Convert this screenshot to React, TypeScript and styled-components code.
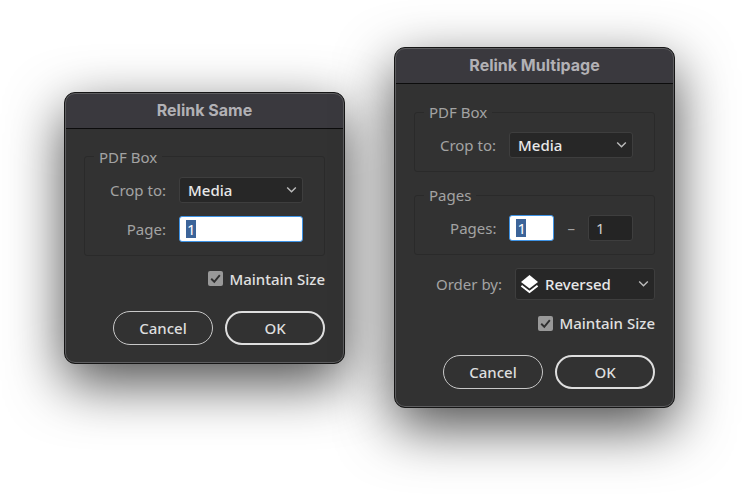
import React, { useId } from 'react';
import styled, { createGlobalStyle } from 'styled-components';

const GlobalStyle = createGlobalStyle`
  *, *::before, *::after { box-sizing: border-box; }
  body {
    margin: 0;
    background: #fff;
    font: 15px/20px "Noto Sans", sans-serif;
  }
`;

const Page = styled.main`
  display: flex;
  align-items: center;
  gap: 49px;
  min-height: 100vh;
  padding: 46px 75px 91px 64px;
`;

const Window = styled.form`
  flex: 1 1 0;
  min-width: 260px;
  max-width: 340px;
  border: 1px solid #161616;
  border-radius: 11px;
  background: #323232;
  overflow: hidden;
  position: relative;
  box-shadow: 0 19px 56px rgba(0, 0, 0, 0.7);

  &::after {
    content: "";
    position: absolute;
    inset: 0;
    border: 1px solid #5e5e60;
    border-radius: 10px;
    pointer-events: none;
  }
`;

const TitleBar = styled.h2`
  margin: 0;
  padding: 7px 12px 8px;
  border-bottom: 1px solid #0c0c0c;
  background: #3a393e;
  color: #b2b1b5;
  font: 700 16px/20px Inter, sans-serif;
  text-align: center;
`;

const Body = styled.div`
  display: flex;
  flex-direction: column;
  gap: 13px;
  padding: 18px 19px;
`;

const Group = styled.fieldset`
  display: flex;
  flex-direction: column;
  gap: 13px;
  min-width: 0;
  margin: 0;
  padding: 10px 21px 13px 9px;
  border: 1px solid #2a2a2a;
  border-radius: 3px;
`;

const Legend = styled.legend`
  padding: 0 5px;
  color: #a3a3a3;
`;

const Row = styled.div`
  display: flex;
  align-items: center;
  justify-content: flex-end;
  gap: 13px;
`;

const Label = styled.label`
  color: #a3a3a3;
`;

const SelectBox = styled.span<{ $large?: boolean }>`
  display: grid;
  align-items: center;
  position: relative;
  width: ${(p) => (p.$large ? 140 : 124)}px;
  height: ${(p) => (p.$large ? 32 : 26)}px;
  color: #e8e8e8;
`;

const Select = styled.select<{ $large?: boolean }>`
  appearance: none;
  width: 100%;
  height: 100%;
  padding: 0 24px 0 ${(p) => (p.$large ? 29 : 8)}px;
  border: 1px solid #3e3e3e;
  border-radius: 3px;
  background: #272727;
  color: inherit;
  font: inherit;
  font-weight: 500;
`;

const Chevron = styled.svg`
  position: absolute;
  right: 6px;
  width: 11px;
  height: 8px;
  pointer-events: none;
`;

const LayersIcon = styled.svg`
  position: absolute;
  left: 5px;
  width: 19px;
  height: 20px;
  pointer-events: none;
`;

const TextInput = styled.input<{ $wide?: boolean; $selected?: boolean }>`
  width: ${(p) => (p.$wide ? 124 : 45)}px;
  height: 26px;
  padding: 0 7px;
  border: 1px solid ${(p) => (p.$selected ? '#3f94e6' : '#3e3e3e')};
  border-radius: 3px;
  outline: none;
  background: ${(p) =>
    p.$selected
      ? 'linear-gradient(#3c6499, #3c6499) 6px center / 10px 18px no-repeat #fff'
      : '#242424'};
  color: ${(p) => (p.$selected ? '#fff' : '#cfcfcf')};
  font: inherit;
`;

const Dash = styled.span`
  color: #a3a3a3;
`;

const CheckLabel = styled.label`
  display: flex;
  align-items: center;
  align-self: flex-end;
  gap: 6px;
  color: #e0e0e0;
  font-weight: 500;
`;

const CheckBox = styled.span`
  display: grid;
  position: relative;
  width: 15px;
  height: 15px;
`;

const CheckInput = styled.input`
  appearance: none;
  width: 15px;
  height: 15px;
  margin: 0;
  border-radius: 2px;
  background: #999;
`;

const CheckMark = styled.svg`
  position: absolute;
  inset: 0;
  pointer-events: none;
  visibility: hidden;

  input:checked + & { visibility: visible; }
`;

const Actions = styled.div`
  display: flex;
  justify-content: flex-end;
  gap: 12px;
  padding-top: 9px;
`;

const Button = styled.button<{ $primary?: boolean }>`
  width: 100px;
  height: 34px;
  padding: 0;
  border: ${(p) => (p.$primary ? '2px solid #dedede' : '1px solid #c8c8c8')};
  border-radius: 17px;
  background: transparent;
  color: #dedede;
  font: inherit;
  font-weight: 500;
`;

function Dropdown({ id, value, options, large }: {
  id: string; value: string; options: string[]; large?: boolean;
}) {
  return (
    <SelectBox $large={large}>
      <Select id={id} defaultValue={value} $large={large}>
        {options.map((o) => <option key={o}>{o}</option>)}
      </Select>
      {large && (
        <LayersIcon viewBox="0 0 19 20" fill="none" aria-hidden="true">
          <path d="M9.5 1 L18 8 L9.5 14.6 L1 8 Z" fill="#fff" />
          <path d="M1.4 11.7 L9.5 18 L17.6 11.7" stroke="#fff" strokeWidth="2" />
        </LayersIcon>
      )}
      <Chevron viewBox="0 0 11 8" fill="none" aria-hidden="true">
        <path d="M1.2 1.5 L5.5 5.8 L9.8 1.5" stroke="#bcbcbc" strokeWidth="1.4" />
      </Chevron>
    </SelectBox>
  );
}

function CropRow() {
  const id = useId();
  return (
    <Row>
      <Label htmlFor={id}>Crop to:</Label>
      <Dropdown id={id} value="Media" options={['Media', 'Art', 'Crop', 'Trim', 'Bleed']} />
    </Row>
  );
}

function Footer() {
  return (
    <>
      <CheckLabel>
        <CheckBox>
          <CheckInput type="checkbox" defaultChecked />
          <CheckMark viewBox="0 0 15 15" fill="none" aria-hidden="true">
            <path d="M3.2 7.8 L6.3 10.8 L11.8 4.2" stroke="#303030" strokeWidth="1.9" />
          </CheckMark>
        </CheckBox>
        Maintain Size
      </CheckLabel>
      <Actions>
        <Button type="button">Cancel</Button>
        <Button type="button" $primary>OK</Button>
      </Actions>
    </>
  );
}

export default function App() {
  return (
    <>
      <GlobalStyle />
      <Page>
        <Window>
          <TitleBar>Relink Same</TitleBar>
          <Body>
            <Group>
              <Legend>PDF Box</Legend>
              <CropRow />
              <Row>
                <Label htmlFor="page">Page:</Label>
                <TextInput id="page" defaultValue="1" $wide $selected />
              </Row>
            </Group>
            <Footer />
          </Body>
        </Window>
        <Window>
          <TitleBar>Relink Multipage</TitleBar>
          <Body>
            <Group>
              <Legend>PDF Box</Legend>
              <CropRow />
            </Group>
            <Group>
              <Legend>Pages</Legend>
              <Row>
                <Label htmlFor="first-page">Pages:</Label>
                <TextInput id="first-page" defaultValue="1" $selected />
                <Dash>–</Dash>
                <TextInput aria-label="Last page" defaultValue="1" />
              </Row>
            </Group>
            <Row>
              <Label htmlFor="order">Order by:</Label>
              <Dropdown id="order" value="Reversed" options={['Ascending', 'Reversed']} large />
            </Row>
            <Footer />
          </Body>
        </Window>
      </Page>
    </>
  );
}
